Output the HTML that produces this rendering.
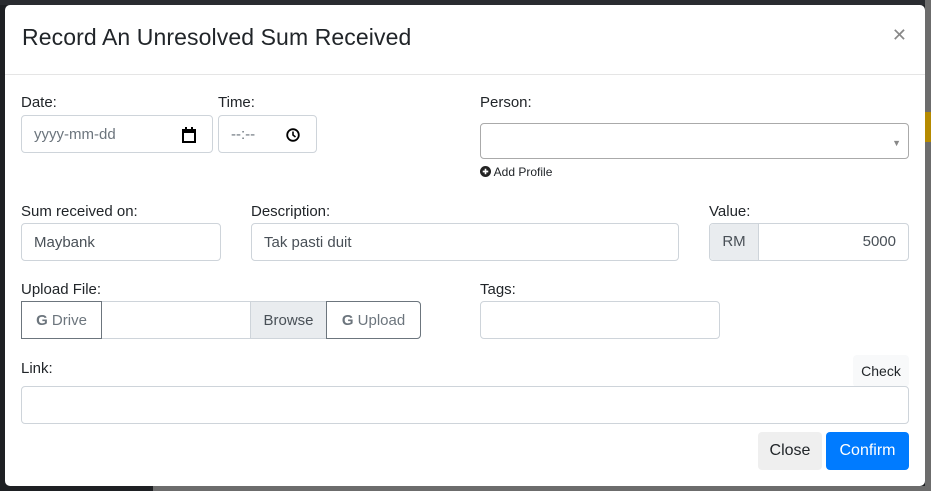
<!DOCTYPE html>
<html><head><meta charset="utf-8"><style>
*{box-sizing:border-box;margin:0;padding:0}
body{width:931px;height:491px;overflow:hidden;background:#1e2023;font-family:"Liberation Sans",sans-serif;color:#212529;position:relative}
.bgr{position:absolute;left:925px;top:0;width:6px;height:491px;background:#6c6c6c}
.bgb{position:absolute;left:153px;top:486px;width:778px;height:5px;background:#6c6c6c}
.gold{position:absolute;left:925px;top:112px;width:6px;height:30px;background:#b58a00}
.top{position:absolute;left:0;top:0;width:931px;height:5px;background:#2a2c30}
.m{position:absolute;left:5px;top:5px;width:920px;height:481px;background:#fff;border-radius:5px}
.hd{position:absolute;left:0;top:0;width:920px;height:70px;border-bottom:1px solid #e5e5e5}
.hd h1{position:absolute;left:17px;top:19px;font-size:23px;font-weight:normal;color:#212529;letter-spacing:.1px}
.x{position:absolute;right:18px;top:20px;font-size:18px;color:#888}
.l{position:absolute;font-size:15px;color:#212529}
.in{position:absolute;border:1px solid #ced4da;border-radius:4px;height:38px;font-size:15px;color:#495057;padding:2px 12px 0;line-height:34px;background:#fff}
.bt{position:absolute;height:38px;line-height:38px;font-size:15px;text-align:center}
.g{font-weight:bold;color:#6c757d}
</style></head><body>
<div class="top"></div><div class="bgr"></div><div class="gold"></div><div class="bgb"></div>
<div class="m">
<div class="hd"><h1>Record An Unresolved Sum Received</h1><div class="x">✕</div></div>
<div class="l" style="left:16px;top:89px">Date:</div>
<div class="l" style="left:213px;top:89px">Time:</div>
<div class="l" style="left:475px;top:89px">Person:</div>
<div class="in" style="left:16px;top:110px;width:192px;color:#6c757d">yyyy-mm-dd<span style="position:absolute;right:16px;top:2px;color:#000">
<svg width="14" height="16" viewBox="0 0 14 16" style="vertical-align:middle"><rect x="1" y="3" width="12" height="12" fill="none" stroke="#000" stroke-width="2"/><rect x="1" y="3" width="12" height="3" fill="#000"/><rect x="3" y="0" width="2" height="4" fill="#000"/><rect x="9" y="0" width="2" height="4" fill="#000"/></svg></span></div>
<div class="in" style="left:213px;top:110px;width:99px;color:#6c757d">--:--<span style="position:absolute;right:16px;top:2px"><svg width="14" height="14" viewBox="0 0 14 14" style="vertical-align:middle"><circle cx="7" cy="7" r="5.8" fill="none" stroke="#000" stroke-width="1.8"/><path d="M7 3.5V7l2.5 2" fill="none" stroke="#000" stroke-width="1.6"/></svg></span></div>
<div class="in" style="left:475px;top:118px;width:429px;height:36px;border-color:#aaa"><span style="position:absolute;right:7px;top:2px;font-size:9px;color:#888">▼</span></div>
<div class="l" style="left:475px;top:160px;font-size:12px"><svg width="11" height="11" viewBox="0 0 12 12" style="vertical-align:-1px"><circle cx="6" cy="6" r="6" fill="#222"/><path d="M6 3v6M3 6h6" stroke="#fff" stroke-width="1.8"/></svg> Add Profile</div>
<div class="l" style="left:16px;top:198px">Sum received on:</div>
<div class="l" style="left:246px;top:198px">Description:</div>
<div class="l" style="left:704px;top:198px">Value:</div>
<div class="in" style="left:16px;top:218px;width:200px">Maybank</div>
<div class="in" style="left:246px;top:218px;width:428px">Tak pasti duit</div>
<div class="in" style="left:704px;top:218px;width:200px;padding:0;line-height:36px"><span style="display:inline-block;width:49px;height:36px;background:#e9ecef;border-right:1px solid #ced4da;text-align:center;border-radius:4px 0 0 4px">RM</span><span style="position:absolute;right:12px">5000</span></div>
<div class="l" style="left:16px;top:276px">Upload File:</div>
<div class="l" style="left:475px;top:276px">Tags:</div>
<div class="in" style="left:16px;top:296px;width:400px;padding:0;border-radius:0 4px 4px 0"></div>
<div class="bt" style="left:16px;top:296px;width:81px;border:1px solid #6c757d;color:#6c757d"><span class="g">G</span> Drive</div>
<div class="bt" style="left:245px;top:296px;width:77px;background:#e9ecef;border:1px solid #ced4da;color:#495057">Browse</div>
<div class="bt" style="left:321px;top:296px;width:95px;border:1px solid #6c757d;border-radius:0 4px 4px 0;color:#6c757d;background:#fff"><span class="g">G</span> Upload</div>
<div class="in" style="left:475px;top:296px;width:240px"></div>
<div class="l" style="left:16px;top:355px">Link:</div>
<div class="bt" style="left:848px;top:350px;width:56px;height:32px;line-height:32px;background:#f8f9fa;border-radius:4px;font-size:14px">Check</div>
<div class="in" style="left:16px;top:381px;width:888px"></div>
<div class="bt" style="left:753px;top:427px;width:64px;background:#efefef;border-radius:4px;font-size:16px">Close</div>
<div class="bt" style="left:821px;top:427px;width:83px;background:#007bff;color:#fff;border-radius:4px;font-size:16px">Confirm</div>
</div>
</body></html>
